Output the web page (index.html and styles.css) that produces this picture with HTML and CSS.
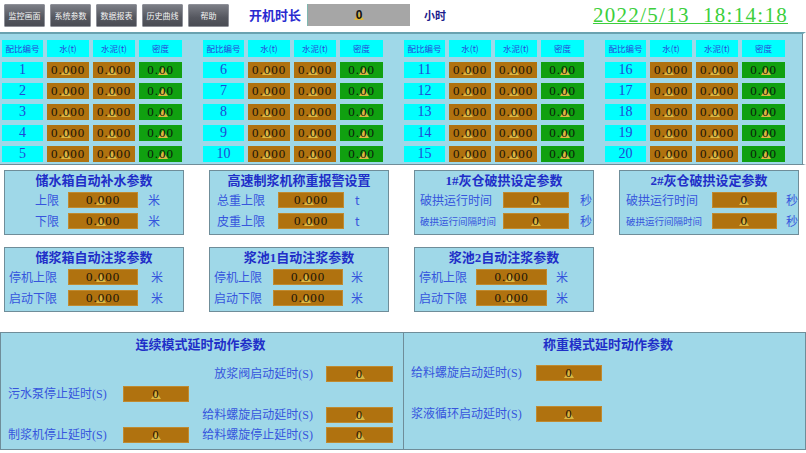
FILE: index.html
```html
<!DOCTYPE html>
<html lang="zh">
<head>
<meta charset="utf-8">
<title>监控画面</title>
<link rel="stylesheet" href="styles.css">
</head>
<body>
<div class="page">
  <header class="topbar">
    <div class="btn">监控画面</div>
    <div class="btn">系统参数</div>
    <div class="btn">数据报表</div>
    <div class="btn">历史曲线</div>
    <div class="btn">帮助</div>
    <div class="runlbl">开机时长</div>
    <div class="runval"><span class="w">0</span></div>
    <div class="hour">小时</div>
    <div class="clock">2022/5/13&nbsp;&nbsp;18:14:18</div>
  </header>

  <section class="ratio">
    <div class="grp">
      <div class="hd">配比编号</div><div class="hd">水(t)</div><div class="hd">水泥(t)</div><div class="hd">密度</div>
      <div class="no">1</div><div class="v">0.<span class="w">0</span>00</div><div class="v">0.<span class="w">0</span>00</div><div class="v g">0.<span class="w">0</span>0</div>
      <div class="no">2</div><div class="v">0.<span class="w">0</span>00</div><div class="v">0.<span class="w">0</span>00</div><div class="v g">0.<span class="w">0</span>0</div>
      <div class="no">3</div><div class="v">0.<span class="w">0</span>00</div><div class="v">0.<span class="w">0</span>00</div><div class="v g">0.<span class="w">0</span>0</div>
      <div class="no">4</div><div class="v">0.<span class="w">0</span>00</div><div class="v">0.<span class="w">0</span>00</div><div class="v g">0.<span class="w">0</span>0</div>
      <div class="no">5</div><div class="v">0.<span class="w">0</span>00</div><div class="v">0.<span class="w">0</span>00</div><div class="v g">0.<span class="w">0</span>0</div>
    </div>
    <div class="grp">
      <div class="hd">配比编号</div><div class="hd">水(t)</div><div class="hd">水泥(t)</div><div class="hd">密度</div>
      <div class="no">6</div><div class="v">0.<span class="w">0</span>00</div><div class="v">0.<span class="w">0</span>00</div><div class="v g">0.<span class="w">0</span>0</div>
      <div class="no">7</div><div class="v">0.<span class="w">0</span>00</div><div class="v">0.<span class="w">0</span>00</div><div class="v g">0.<span class="w">0</span>0</div>
      <div class="no">8</div><div class="v">0.<span class="w">0</span>00</div><div class="v">0.<span class="w">0</span>00</div><div class="v g">0.<span class="w">0</span>0</div>
      <div class="no">9</div><div class="v">0.<span class="w">0</span>00</div><div class="v">0.<span class="w">0</span>00</div><div class="v g">0.<span class="w">0</span>0</div>
      <div class="no">10</div><div class="v">0.<span class="w">0</span>00</div><div class="v">0.<span class="w">0</span>00</div><div class="v g">0.<span class="w">0</span>0</div>
    </div>
    <div class="grp">
      <div class="hd">配比编号</div><div class="hd">水(t)</div><div class="hd">水泥(t)</div><div class="hd">密度</div>
      <div class="no">11</div><div class="v">0.<span class="w">0</span>00</div><div class="v">0.<span class="w">0</span>00</div><div class="v g">0.<span class="w">0</span>0</div>
      <div class="no">12</div><div class="v">0.<span class="w">0</span>00</div><div class="v">0.<span class="w">0</span>00</div><div class="v g">0.<span class="w">0</span>0</div>
      <div class="no">13</div><div class="v">0.<span class="w">0</span>00</div><div class="v">0.<span class="w">0</span>00</div><div class="v g">0.<span class="w">0</span>0</div>
      <div class="no">14</div><div class="v">0.<span class="w">0</span>00</div><div class="v">0.<span class="w">0</span>00</div><div class="v g">0.<span class="w">0</span>0</div>
      <div class="no">15</div><div class="v">0.<span class="w">0</span>00</div><div class="v">0.<span class="w">0</span>00</div><div class="v g">0.<span class="w">0</span>0</div>
    </div>
    <div class="grp">
      <div class="hd">配比编号</div><div class="hd">水(t)</div><div class="hd">水泥(t)</div><div class="hd">密度</div>
      <div class="no">16</div><div class="v">0.<span class="w">0</span>00</div><div class="v">0.<span class="w">0</span>00</div><div class="v g">0.<span class="w">0</span>0</div>
      <div class="no">17</div><div class="v">0.<span class="w">0</span>00</div><div class="v">0.<span class="w">0</span>00</div><div class="v g">0.<span class="w">0</span>0</div>
      <div class="no">18</div><div class="v">0.<span class="w">0</span>00</div><div class="v">0.<span class="w">0</span>00</div><div class="v g">0.<span class="w">0</span>0</div>
      <div class="no">19</div><div class="v">0.<span class="w">0</span>00</div><div class="v">0.<span class="w">0</span>00</div><div class="v g">0.<span class="w">0</span>0</div>
      <div class="no">20</div><div class="v">0.<span class="w">0</span>00</div><div class="v">0.<span class="w">0</span>00</div><div class="v g">0.<span class="w">0</span>0</div>
    </div>
  </section>

  <section class="mid">
    <div class="box b1">
      <div class="title">储水箱自动补水参数</div>
      <div class="row"><span class="lbl">上限</span><span class="inp">0.<span class="w">0</span>00</span><span class="unit">米</span></div>
      <div class="row"><span class="lbl">下限</span><span class="inp">0.<span class="w">0</span>00</span><span class="unit">米</span></div>
    </div>
    <div class="box b2">
      <div class="title">高速制浆机称重报警设置</div>
      <div class="row"><span class="lbl">总重上限</span><span class="inp">0.<span class="w">0</span>00</span><span class="unit">t</span></div>
      <div class="row"><span class="lbl">皮重上限</span><span class="inp">0.<span class="w">0</span>00</span><span class="unit">t</span></div>
    </div>
    <div class="box b3">
      <div class="title">1#灰仓破拱设定参数</div>
      <div class="row"><span class="lbl">破拱运行时间</span><span class="inp"><span class="w">0</span></span><span class="unit">秒</span></div>
      <div class="row"><span class="lbl sm">破拱运行间隔时间</span><span class="inp"><span class="w">0</span></span><span class="unit">秒</span></div>
    </div>
    <div class="box b4">
      <div class="title">2#灰仓破拱设定参数</div>
      <div class="row"><span class="lbl">破拱运行时间</span><span class="inp"><span class="w">0</span></span><span class="unit">秒</span></div>
      <div class="row"><span class="lbl sm">破拱运行间隔时间</span><span class="inp"><span class="w">0</span></span><span class="unit">秒</span></div>
    </div>
    <div class="box b5">
      <div class="title">储浆箱自动注浆参数</div>
      <div class="row"><span class="lbl">停机上限</span><span class="inp">0.<span class="w">0</span>00</span><span class="unit">米</span></div>
      <div class="row"><span class="lbl">启动下限</span><span class="inp">0.<span class="w">0</span>00</span><span class="unit">米</span></div>
    </div>
    <div class="box b6">
      <div class="title">浆池1自动注浆参数</div>
      <div class="row"><span class="lbl">停机上限</span><span class="inp">0.<span class="w">0</span>00</span><span class="unit">米</span></div>
      <div class="row"><span class="lbl">启动下限</span><span class="inp">0.<span class="w">0</span>00</span><span class="unit">米</span></div>
    </div>
    <div class="box b7">
      <div class="title">浆池2自动注浆参数</div>
      <div class="row"><span class="lbl">停机上限</span><span class="inp">0.<span class="w">0</span>00</span><span class="unit">米</span></div>
      <div class="row"><span class="lbl">启动下限</span><span class="inp">0.<span class="w">0</span>00</span><span class="unit">米</span></div>
    </div>
  </section>

  <section class="bottom">
    <div class="panel left">
      <div class="ptitle">连续模式延时动作参数</div>
      <div class="pgrid">
        <div></div><div></div><div class="plbl r">放浆阀启动延时(S)</div><div class="inp"><span class="w">0</span></div>
        <div class="plbl">污水泵停止延时(S)</div><div class="inp"><span class="w">0</span></div><div></div><div></div>
        <div></div><div></div><div class="plbl r">给料螺旋启动延时(S)</div><div class="inp"><span class="w">0</span></div>
        <div class="plbl">制浆机停止延时(S)</div><div class="inp"><span class="w">0</span></div><div class="plbl r">给料螺旋停止延时(S)</div><div class="inp"><span class="w">0</span></div>
      </div>
    </div>
    <div class="panel right">
      <div class="ptitle">称重模式延时动作参数</div>
      <div class="pgrid2">
        <div class="plbl">给料螺旋启动延时(S)</div><div class="inp"><span class="w">0</span></div>
        <div></div><div></div>
        <div class="plbl">浆液循环启动延时(S)</div><div class="inp"><span class="w">0</span></div>
      </div>
    </div>
  </section>
</div>
</body>
</html>
```

FILE: styles.css
```css
* { box-sizing: border-box; }
html, body { margin: 0; padding: 0; background: #fff; }
body {
  width: 806px;
  height: 453px;
  overflow: hidden;
  font-family: "Liberation Serif", "Noto Sans CJK SC", serif;
}
.page { width: 806px; height: 453px; }

/* top bar */
.topbar {
  height: 32px;
  display: flex;
  align-items: flex-start;
  padding: 4px 0 0 4px;
}
.btn {
  width: 41px;
  height: 23px;
  margin-right: 5px;
  background: linear-gradient(#7c7e86, #55575f 60%, #4a4c54);
  border: 1px solid #8e9098;
  border-radius: 1px;
  color: #f4f4f4;
  font-family: "Noto Sans CJK SC", sans-serif;
  font-size: 8px;
  line-height: 21px;
  text-align: center;
}
.runlbl {
  margin-left: 15px;
  color: #2a2ad0;
  font-family: "Noto Sans CJK SC", sans-serif;
  font-weight: 700;
  font-size: 13px;
  line-height: 22px;
}
.runval {
  margin-left: 6px;
  width: 103px;
  height: 22px;
  background: #a6a6a6;
  border-left: 1px solid #7fb8b0;
  text-align: center;
  font-size: 12px;
  line-height: 22px;
  color: #111;
  font-family: "Liberation Sans", sans-serif;
  font-weight: 700;
}
.hour {
  margin-left: 14px;
  color: #1c1c8c;
  font-family: "Noto Sans CJK SC", sans-serif;
  font-weight: 700;
  font-size: 11px;
  line-height: 22px;
}
.clock {
  margin-left: auto;
  margin-right: 18px;
  color: #3ccf3c;
  font-family: "Liberation Serif", serif;
  font-size: 21px;
  letter-spacing: 1.3px;
  line-height: 22px;
  text-decoration: underline;
  text-decoration-thickness: 1px;
  text-underline-offset: 1px;
}

/* warning triangle behind a digit */
.w { position: relative; z-index: 0; }
.w::before {
  content: "";
  position: absolute;
  z-index: -1;
  left: 50%;
  bottom: 2px;
  transform: translateX(-50%);
  border-left: 5px solid transparent;
  border-right: 5px solid transparent;
  border-bottom: 8px solid #dcb640;
}

/* ratio table */
.ratio {
  width: 806px;
  height: 133px;
  background: #9fd8e8;
  border-top: 2px solid #6aa2b0;
  border-bottom: 1px solid #6f8d99;
  border-right: 3px solid #fff;
  box-shadow: inset -1px 0 0 #6f8d99;
  display: flex;
  column-gap: 21px;
  padding: 6px 0 0 2px;
}
.grp {
  display: grid;
  grid-template-columns: 41px 42px 42px 43px;
  grid-template-rows: 17px repeat(5, 16px);
  column-gap: 4px;
  row-gap: 5px;
}
.hd {
  background: #00ffff;
  color: #2848d8;
  font-family: "Noto Sans CJK SC", sans-serif;
  font-size: 8.5px;
  line-height: 17px;
  text-align: center;
}
.no {
  background: #00ffff;
  color: #1f4ad6;
  font-size: 14px;
  line-height: 16px;
  text-align: center;
}
.v {
  background: #b0720f;
  color: #1a1408;
  font-size: 13px;
  line-height: 16px;
  letter-spacing: 1px;
  text-align: center;
}
.v.g { background: #10a010; color: #0a1a0a; }

/* middle parameter boxes */
.mid {
  height: 167px;
  display: grid;
  grid-template-columns: repeat(4, 180px);
  grid-template-rows: 65px 65px;
  column-gap: 25px;
  row-gap: 12px;
  padding: 5px 0 0 4px;
}
.box {
  background: #9fd8e8;
  border: 1px solid #6f8d99;
  padding-top: 1px;
}
.title {
  color: #1f2fc8;
  font-weight: 700;
  font-size: 13px;
  line-height: 17px;
  height: 17px;
  text-align: center;
  margin-bottom: 3px;
}
.row {
  display: flex;
  height: 16px;
  margin-bottom: 5px;
  align-items: center;
  color: #3655dd;
  font-family: "Noto Sans CJK SC", sans-serif;
  font-size: 12px;
}
.lbl { white-space: nowrap; line-height: 16px; }
.lbl.sm { font-size: 9.5px; }
.inp {
  height: 16px;
  background: #b0720f;
  border: 1px solid #c08a30;
  color: #1a1408;
  font-family: "Liberation Serif", serif;
  font-size: 13px;
  line-height: 14px;
  letter-spacing: 1px;
  text-align: center;
}
.unit { line-height: 16px; }

.b1 .row { padding-left: 30px; }
.b1 .lbl { width: 33px; }
.b1 .inp { width: 70px; margin-right: 10px; }
.b2 .row { padding-left: 7px; }
.b2 .lbl { width: 61px; }
.b2 .inp { width: 66px; margin-right: 11px; }
.b3 .row { padding-left: 5px; }
.b3 .lbl { width: 83px; }
.b3 .inp { width: 66px; margin-right: 11px; }
.b4 .row { padding-left: 6px; }
.b4 .lbl { width: 88px; }
.b4 .inp { width: 67px; margin-right: 9px; }
.b5 .row, .b6 .row, .b7 .row { padding-left: 4px; }
.b5 .lbl { width: 59px; }
.b5 .inp { width: 70px; margin-right: 13px; }
.b6 .lbl { width: 59px; }
.b6 .inp { width: 70px; margin-right: 8px; }
.b7 .lbl { width: 57px; }
.b7 .inp { width: 71px; margin-right: 9px; }

/* bottom panels */
.bottom {
  display: flex;
  height: 118px;
}
.panel {
  background: #9fd8e8;
  border: 1px solid #6f8d99;
  padding-top: 2px;
}
.panel.left { width: 404px; padding-left: 7px; padding-right: 10px; }
.panel.right { width: 402px; border-left: 0; padding-left: 7px; }
.ptitle {
  color: #1f2fc8;
  font-weight: 700;
  font-size: 13px;
  line-height: 20px;
  text-align: center;
  margin-bottom: 11px;
}
.pgrid {
  display: grid;
  grid-template-columns: 115px 66px 137px 67px;
  grid-template-rows: repeat(4, 16px);
  row-gap: 4.33px;
}
.pgrid2 {
  display: grid;
  grid-template-columns: 125px 66px;
  grid-template-rows: repeat(3, 16px);
  row-gap: 4.33px;
  margin-top: -1px;
}
.plbl {
  color: #3655dd;
  font-family: "Liberation Serif", "Noto Sans CJK SC", serif;
  font-size: 12px;
  line-height: 16px;
  white-space: nowrap;
}
.plbl.r { text-align: right; padding-right: 13px; }
.pgrid .inp, .pgrid2 .inp { font-size: 12px; }
```
